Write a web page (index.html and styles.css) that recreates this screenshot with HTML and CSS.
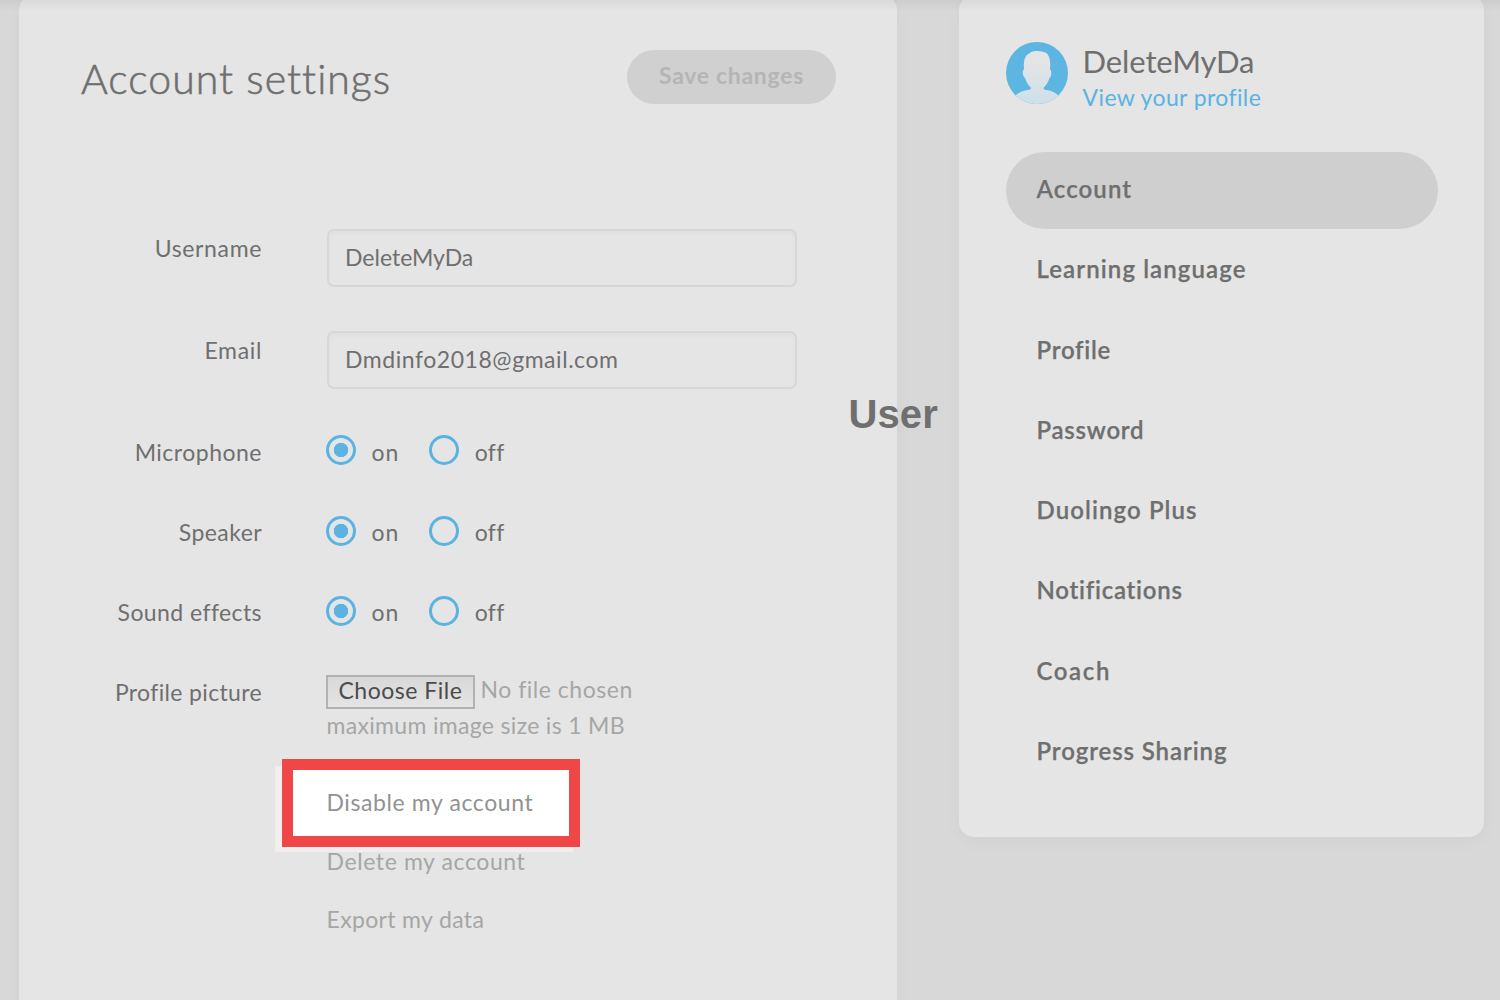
FILE: index.html
```html
<!DOCTYPE html>
<html lang="en">
<head>
<meta charset="utf-8">
<title>Account settings</title>
<link rel="stylesheet" href="styles.css">
</head>
<body>
<div class="page">
  <main class="panel settings">
    <header class="settings-head">
      <h1 class="title">Account settings</h1>
      <button class="save">Save changes</button>
    </header>
    <form class="form">
      <div class="row field"><label class="label wide">Username</label><div class="input">DeleteMyDa</div></div>
      <div class="row field"><label class="label wide">Email</label><div class="input address">Dmdinfo2018@gmail.com</div></div>
      <div class="row toggle"><label class="label mic">Microphone</label><div class="options"><i class="radio checked"></i><span class="on">on</span><i class="radio"></i><span class="off">off</span></div></div>
      <div class="row toggle"><label class="label">Speaker</label><div class="options"><i class="radio checked"></i><span class="on">on</span><i class="radio"></i><span class="off">off</span></div></div>
      <div class="row toggle"><label class="label">Sound effects</label><div class="options"><i class="radio checked"></i><span class="on">on</span><i class="radio"></i><span class="off">off</span></div></div>
      <div class="row picture"><label class="label snug-label">Profile picture</label>
        <div class="upload">
          <div class="file"><div class="choose">Choose File</div><span class="nofile">No file chosen</span></div>
          <div class="hint">maximum image size is 1 MB</div>
        </div>
      </div>
      <div class="links">
        <a class="link disable">Disable my account</a>
        <a class="link">Delete my account</a>
        <a class="link export">Export my data</a>
      </div>
    </form>
  </main>
  <aside class="panel side">
    <div class="user">
      <svg class="avatar" viewBox="0 0 62 62">
        <defs>
          <linearGradient id="skin" x1="0" y1="0" x2="0" y2="1"><stop offset="0.200" stop-color="#e3e5e6"/><stop offset="1" stop-color="#cddfe9"/></linearGradient>
          <clipPath id="round"><circle cx="31" cy="31" r="31"/></clipPath>
        </defs>
        <g clip-path="url(#round)">
          <rect width="62" height="62" fill="#5db5e1"/>
          <path fill="url(#skin)" d="M24 11C26 8 38 8.500 41 11.500C44.500 15 44.500 22 44 27.500C46 28 45.500 35 43.500 36C42.500 40 40 43 37.500 46C37.500 47.500 39 47.800 42 48.300C46 49 49 50.500 52.500 53.500L62 63H0L9.500 53.500C13 50.500 16 49 20 48.300C23 47.800 25 47.500 25 46C22.500 43 20 40 19 36C16.500 35 16 28 18 27.500C17.500 20 18 13.500 24 11Z"/>
        </g>
      </svg>
      <div class="who"><div class="name">DeleteMyDa</div><a class="view">View your profile</a></div>
    </div>
    <nav class="menu">
      <a class="item active">Account</a>
      <a class="item">Learning language</a>
      <a class="item snug">Profile</a>
      <a class="item snug">Password</a>
      <a class="item">Duolingo Plus</a>
      <a class="item snug">Notifications</a>
      <a class="item roomy">Coach</a>
      <a class="item progress">Progress Sharing</a>
    </nav>
  </aside>
  <div class="top-shade"></div>
  <div class="caption">User</div>
</div>
</body>
</html>
```
FILE: styles.css
```css
*, *::before, *::after { box-sizing: border-box; }
body { margin: 0; background: #d8d8d8; color: #6f6f6f; font: 400 23px/28px Lato, sans-serif; overflow: hidden; }
.page { position: relative; width: 1500px; height: 1000px; overflow: hidden; display: flex; align-items: flex-start; gap: 62px; padding-left: 19px; }
.panel { flex-shrink: 0; background: #e5e5e5; border-radius: 15px; box-shadow: 0 4px 18px rgba(0,0,0,.035); margin-top: -5px; }
.settings { width: 878px; height: 1040px; }
.side { width: 525px; height: 842px; padding: 47px 46px 0 46.500px; }
.settings-head { display: flex; justify-content: space-between; padding: 55px 61px 0 62px; height: 220px; }
.title { margin: 0; font-weight: 300; font-size: 41px; line-height: 58px; letter-spacing: 1.020px; -webkit-text-stroke: .6px #6f6f6f; }
.save { width: 209px; height: 54px; border: 0; border-radius: 27px; background: #d0d0d0; color: #b5b5b5; font: 700 23px/50px Lato, sans-serif; letter-spacing: .7px; padding: 0 0 4px; }
.row { display: flex; }
.label { width: 243px; text-align: right; margin-right: 64px; letter-spacing: .42px; }
.wide { letter-spacing: .65px; }
.mic { letter-spacing: .5px; }
.snug-label { letter-spacing: .35px; }
.field { height: 102px; padding-top: 14px; }
.field .label { padding-top: 5px; margin-right: 65px; }
.input { width: 470px; height: 58px; border: 2px solid #d7d7d7; border-radius: 7px; padding: 12px 16px; box-shadow: inset 0 3px 5px rgba(0,0,0,.025); }
.address { letter-spacing: .55px; }
.toggle { height: 80.300px; padding-top: 18.600px; }
.options { display: flex; }
.radio { width: 30px; height: 30px; border: 3px solid #5ab3e1; border-radius: 50%; margin-top: -2.300px; }
.checked { background: radial-gradient(circle, #5ab3e1 0 6.900px, transparent 7.500px); }
.on { width: 58.400px; margin: 0 0 0 15px; padding-left: .4px; letter-spacing: 1px; }
.off { margin-left: 15.300px; letter-spacing: .3px; }
.picture { padding-top: 18px; height: 104px; }
.upload { color: #a6a6a6; margin-top: -3px; }
.file { display: flex; }
.choose { width: 149px; height: 34px; border: 2px solid #b2b2b2; background: linear-gradient(#d8d8d8, #e4e4e4); color: #4b4b4b; padding-left: 10.500px; line-height: 26px; letter-spacing: .5px; }
.nofile { margin-left: 5.500px; letter-spacing: .52px; }
.hint { margin-top: 2px; padding-left: .5px; letter-spacing: .32px; }
.links { margin: 24px 0 0 307.500px; display: flex; flex-direction: column; align-items: flex-start; gap: 30.700px; color: #a6a6a6; letter-spacing: .6px; isolation: isolate; }
.export { letter-spacing: .35px; }
.disable { position: relative; color: #929292; }
.disable::before, .disable::after { content: ""; position: absolute; z-index: -1; width: 298px; }
.disable::before { left: -51.500px; top: -22px; height: 86px; background: #f0efee; }
.disable::after { left: -44.500px; top: -29px; height: 88px; border: 11px solid #ef4747; background: #fff; }
.user { display: flex; gap: 15px; height: 110px; }
.avatar { width: 62px; height: 62px; }
.name { font-size: 31px; line-height: 38px; letter-spacing: -.1px; }
.view { display: block; color: #5ab3e1; margin-top: 3px; letter-spacing: .4px; }
.item { display: block; width: 432px; height: 77px; margin-bottom: 3.250px; border-radius: 39px; padding: 23.100px 31px; font-size: 24px; font-weight: 600; letter-spacing: 1.100px; -webkit-text-stroke: .25px #6f6f6f; }
.snug { letter-spacing: .75px; }
.roomy { letter-spacing: 1.600px; }
.progress { letter-spacing: .9px; }
.active { background: #cfcfcf; }
.top-shade { position: absolute; left: 0; top: 0; width: 100%; height: 11px; background: linear-gradient(rgba(0,0,0,.05), rgba(0,0,0,0)); }
.caption { position: absolute; left: 848.500px; top: 390px; font: 700 40px/48px "Liberation Sans", sans-serif; letter-spacing: .1px; }
```
